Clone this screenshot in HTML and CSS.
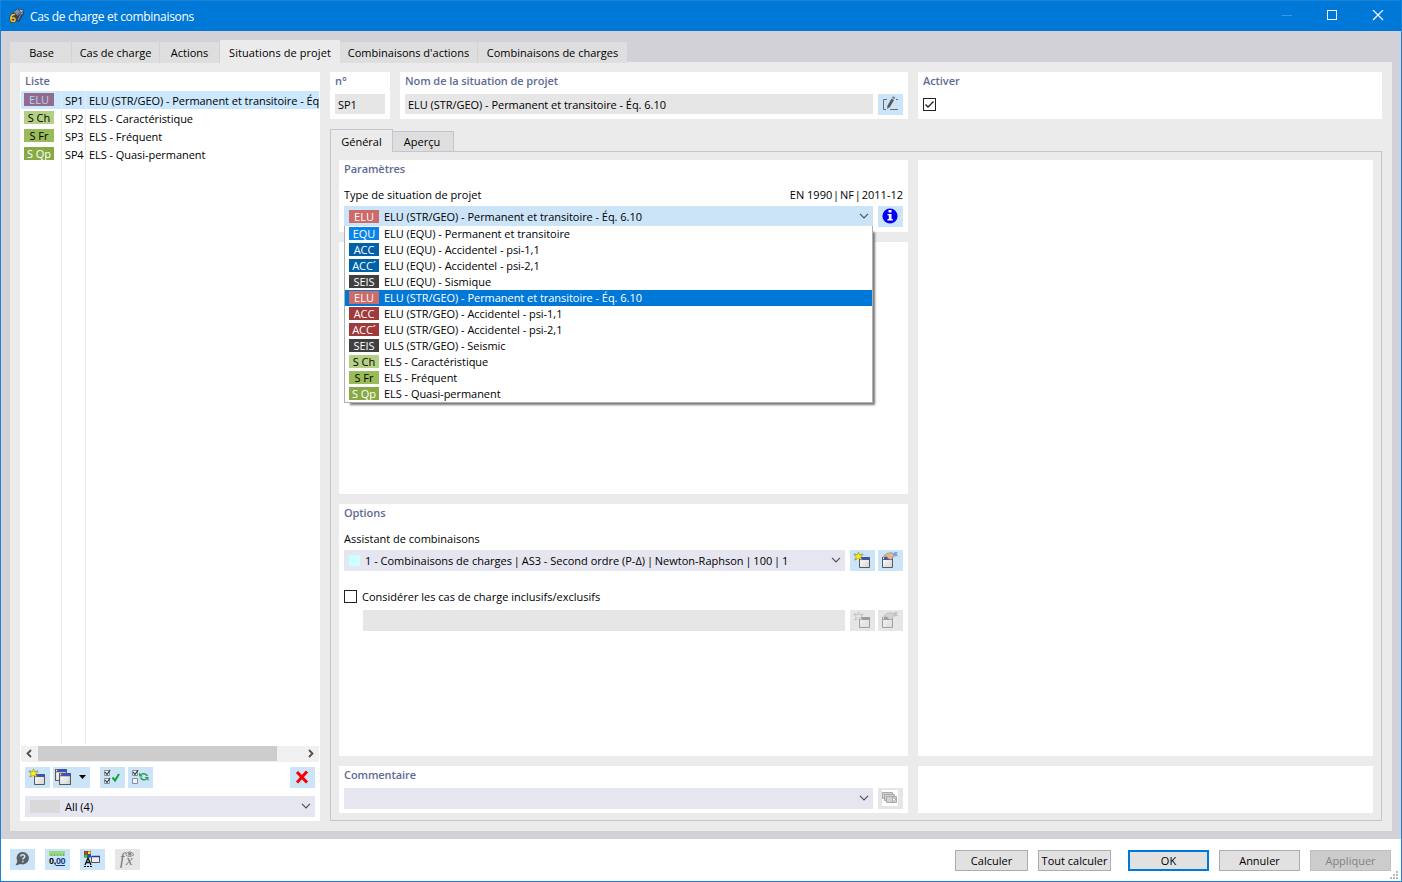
FILE: index.html
```html
<!DOCTYPE html>
<html lang="fr">
<head>
    <meta charset="UTF-8">
    <title>Cas de charge et combinaisons</title>
    <link rel="stylesheet" href="styles.css">
</head>
<body>

    <svg class="defs">
        <linearGradient id="face" x1="0" y1="0" x2="1" y2="1">
            <stop offset="0" stop-color="#ffffff"/>
            <stop offset="1" stop-color="#d4d4d4"/>
        </linearGradient>
        <symbol id="chevron" viewBox="0 0 10 6"><path d="M1 .8 L5 4.8 L9 .8" fill="none" stroke="#505058" stroke-width="1.2"/></symbol>
        <symbol id="win" viewBox="0 0 11 11">
            <path d="M.5 .5 H10.5 V10.5 H.5 Z" fill="url(#face)" stroke="#5a5a5a"/>
            <path d="M0 0 H11 V3 H0 Z" fill="#5a5a5a"/>
            <path d="M3 .6 H10 V2.2 H3 Z" fill="#2b4dff"/>
            <path d="M1 .6 H2 V2 H1 Z" fill="#fff"/>
        </symbol>
        <symbol id="new" viewBox="0 0 25 21">
            <use href="#win" x="9" y="7" width="11" height="11"/>
            <path d="M4.500 3.500 L12.500 9.500 M12.500 3.500 L4.500 9.500" stroke="#77773c" stroke-width=".8"/>
            <path d="M8.500 1.800 L9.700 5 L13.300 4.700 L10.600 7 L12 10.200 L8.500 8.300 L5.200 10.200 L6.300 7 L3.800 4.700 L7.300 5 Z" fill="#fff200" stroke="#8a8a5a" stroke-width=".6"/>
        </symbol>
        <symbol id="edit" viewBox="0 0 25 21">
            <use href="#win" x="4" y="7" width="11" height="11"/>
            <path d="M5.500 6 L9 3.400 L13 2.600 L16 4 L15 7 L14 9 L12.500 9.600 L10 8.500 L9 6.600 L6 6.800 Z" fill="#dcb896" stroke="#a57c5c" stroke-width=".6"/>
            <path d="M14.500 3.500 L17 2 L20 2 L18.500 3.500 L20 6 L16 6.500 Z" fill="#7ea4d8"/>
        </symbol>
    </svg>

    <div class="window">
        <div class="titlebar">
            <svg class="app-icon" width="16" height="16" viewBox="0 0 16 16">
                <path d="M4 4 L8 .5 L15 2 L15 6 L10 14 L6 13 Z" fill="#33425c"/>
                <path d="M5 4 L8.500 1 L11 4 L8 7 Z" fill="#8292b0"/>
                <path d="M10 1.500 L14.500 2.500 L12 4.500 Z" fill="#a9b6cc"/>
                <path d="M8 7.500 L11.500 5 L14 6 M9 12 L11 8 L14 3" fill="none" stroke="#93a2bd" stroke-width=".8"/>
                <path d="M6 6.500 C3 6 1.800 8 1.800 10.500 C1.800 12.800 2.500 13.600 4 13.600 C5.400 13.600 6.100 12.700 6.100 11.500 C6.100 9.800 4 9.300 2.600 10.500" fill="none" stroke="#3e3a20" stroke-width="2.600"/>
                <path d="M6 6.500 C3 6 1.800 8 1.800 10.500 C1.800 12.800 2.500 13.600 4 13.600 C5.400 13.600 6.100 12.700 6.100 11.500 C6.100 9.800 4 9.300 2.600 10.500" fill="none" stroke="#f5c22c" stroke-width="1.500"/>
            </svg>
            <span class="title">Cas de charge et combinaisons</span>
            <svg class="win-controls" width="110" height="12" viewBox="0 0 110 12" fill="none" stroke="#fff">
                <path d="M2 5.500 H12" stroke="#3d97e2"/>
                <rect x="47.500" y=".5" width="9" height="9"/>
                <path d="M93 0 L103 10 M103 0 L93 10" stroke-width="1.200"/>
            </svg>
        </div>

        <div class="workspace">
            <div class="tabs">
                <div class="tab base">Base</div>
                <div class="tab cas">Cas de charge</div>
                <div class="tab act">Actions</div>
                <div class="tab sit active">Situations de projet</div>
                <div class="tab comb-a">Combinaisons d'actions</div>
                <div class="tab comb-c">Combinaisons de charges</div>
            </div>

            <div class="page">
                <div class="panel list-panel">
                    <div class="heading">Liste</div>
                    <div class="list">
                        <div class="list-row selected"><span class="badge elu-sel">ELU</span><span class="no">SP1</span><span class="name">ELU (STR/GEO) - Permanent et transitoire - Éq. 6.10</span></div>
                        <div class="list-row"><span class="badge sch">S Ch</span><span class="no">SP2</span><span class="name">ELS - Caractéristique</span></div>
                        <div class="list-row"><span class="badge sfr">S Fr</span><span class="no">SP3</span><span class="name">ELS - Fréquent</span></div>
                        <div class="list-row"><span class="badge sqp">S Qp</span><span class="no">SP4</span><span class="name">ELS - Quasi-permanent</span></div>
                        <div class="list-row rest"><span class="badge"></span><span class="no"></span><span class="name"></span></div>
                    </div>
                    <div class="scrollbar">
                        <svg width="17" height="15" viewBox="0 0 17 15"><path d="M10 4 L6.500 7.500 L10 11" fill="none" stroke="#505050" stroke-width="1.800"/></svg>
                        <div class="thumb"></div>
                        <svg width="17" height="15" viewBox="0 0 17 15"><path d="M7 4 L10.500 7.500 L7 11" fill="none" stroke="#505050" stroke-width="1.800"/></svg>
                    </div>
                    <div class="toolbar">
                        <div class="btn"><svg class="shift" width="25" height="21"><use href="#new"/></svg></div>
                        <div class="btn wide">
                            <svg width="37" height="21" viewBox="0 0 37 21">
                                <use href="#win" x="2" y="2" width="12" height="12"/>
                                <use href="#win" x="6" y="6" width="12" height="12"/>
                                <path d="M26 8 H33 L29.500 12 Z" fill="#000"/>
                            </svg>
                        </div>
                        <div class="btn checks">
                            <svg width="25" height="21" viewBox="0 0 25 21" fill="none">
                                <path d="M4.500 3.500 H9.500 V8.500 H4.500 Z M4.500 11.500 H9.500 V16.500 H4.500 Z" stroke="#8a8f94" fill="#eef4fa"/>
                                <path d="M5 5 L7 7.500 L10 3 M5 13 L7 15.500 L10 11" stroke="#333" stroke-width="1.100"/>
                                <path d="M12.500 10.500 L15 13.500 L19 7" stroke="#14a03c" stroke-width="2"/>
                            </svg>
                        </div>
                        <div class="btn">
                            <svg width="25" height="21" viewBox="0 0 25 21" fill="none">
                                <path d="M4.500 3.500 H9.500 V8.500 H4.500 Z M4.500 11.500 H9.500 V16.500 H4.500 Z" stroke="#8a8f94" fill="#eef4fa"/>
                                <path d="M5 5 L7 7.500 L10 3" stroke="#333" stroke-width="1.100"/>
                                <path d="M13 7.500 C15 6 18 6.500 19.500 9 M18.500 12 C16.500 13.500 14 13 12.500 10.500" stroke="#2fa257" stroke-width="1.500"/>
                                <path d="M11 5.500 V9.500 H15 Z M20.500 14 V10 H16.500 Z" fill="#2fa257"/>
                            </svg>
                        </div>
                        <div class="btn delete">
                            <svg width="25" height="21" viewBox="0 0 25 21"><path d="M7 5 L17 15.500 M17 4.500 L7 15.500" stroke="#f80000" stroke-width="3"/></svg>
                        </div>
                    </div>
                    <div class="combo filter">
                        <span class="swatch grey"></span><span>All (4)</span>
                        <svg class="chev" width="10" height="6"><use href="#chevron"/></svg>
                    </div>
                </div>

                <div class="detail">
                    <div class="header-row">
                        <div class="panel number">
                            <div class="heading">n°</div>
                            <div class="field">SP1</div>
                        </div>
                        <div class="panel designation">
                            <div class="heading">Nom de la situation de projet</div>
                            <div class="line">
                                <div class="field">ELU (STR/GEO) - Permanent et transitoire - Éq. 6.10</div>
                                <div class="btn">
                                    <svg width="25" height="21" viewBox="0 0 25 21">
                                        <path d="M9 5.500 H5.500 V15.500 H8 M12 15.500 H20 M18 5.500 H20" fill="none" stroke="#6a6a6a"/>
                                        <path d="M9 15 L9.600 11.500 L13.500 4.500 L16 6 L12 13 Z" fill="#5a5a5a"/>
                                        <path d="M14 3.800 L15 2.300 L17.200 3.500 L16.400 5.200 Z" fill="#777"/>
                                    </svg>
                                </div>
                            </div>
                        </div>
                        <div class="panel enable">
                            <div class="heading">Activer</div>
                            <svg class="checkbox" width="13" height="13" viewBox="0 0 13 13" fill="none" stroke="#222">
                                <rect x=".5" y=".5" width="12" height="12"/>
                                <path d="M2.500 6.500 L5 9 L10.500 3.500" stroke-width="1.300"/>
                            </svg>
                        </div>
                    </div>

                    <div class="subtabs">
                        <div class="subtab active">Général</div>
                        <div class="subtab">Aperçu</div>
                    </div>

                    <div class="sheet">
                        <div class="panel params">
                            <div class="heading">Paramètres</div>
                            <div class="label-row"><span>Type de situation de projet</span><span class="norm">EN 1990 <span class="bar">|</span> NF <span class="bar">|</span> 2011-12</span></div>
                            <div class="line type-line">
                                <div class="combo open">
                                    <span class="badge elu">ELU</span><span>ELU (STR/GEO) - Permanent et transitoire - Éq. 6.10</span>
                                    <svg class="chev" width="10" height="6"><use href="#chevron"/></svg>
                                    <div class="dropdown">
                                        <div class="option"><span class="badge equ">EQU</span>ELU (EQU) - Permanent et transitoire</div>
                                        <div class="option"><span class="badge acc-b">ACC</span>ELU (EQU) - Accidentel - psi-1,1</div>
                                        <div class="option"><span class="badge acc-b">ACC´</span>ELU (EQU) - Accidentel - psi-2,1</div>
                                        <div class="option"><span class="badge seis">SEIS</span>ELU (EQU) - Sismique</div>
                                        <div class="option current"><span class="badge elu">ELU</span>ELU (STR/GEO) - Permanent et transitoire - Éq. 6.10</div>
                                        <div class="option"><span class="badge acc-r">ACC</span>ELU (STR/GEO) - Accidentel - psi-1,1</div>
                                        <div class="option"><span class="badge acc-r">ACC´</span>ELU (STR/GEO) - Accidentel - psi-2,1</div>
                                        <div class="option"><span class="badge seis">SEIS</span>ULS (STR/GEO) - Seismic</div>
                                        <div class="option"><span class="badge sch">S Ch</span>ELS - Caractéristique</div>
                                        <div class="option"><span class="badge sfr">S Fr</span>ELS - Fréquent</div>
                                        <div class="option"><span class="badge sqp">S Qp</span>ELS - Quasi-permanent</div>
                                    </div>
                                </div>
                                <div class="btn">
                                    <svg width="25" height="21" viewBox="0 0 25 21">
                                        <circle cx="12" cy="10" r="7.600" fill="#0000f5"/>
                                        <path d="M10.500 4 H13.500 V6.500 H10.500 Z M9.500 8 H13.500 V13 H14.800 V14.500 H9.500 V13 H10.800 V9.300 H9.500 Z" fill="#fff"/>
                                    </svg>
                                </div>
                            </div>
                        </div>
                        <div class="panel preview"></div>
                        <div class="panel"></div>
                        <div class="panel options">
                            <div class="heading">Options</div>
                            <div class="label-row"><span>Assistant de combinaisons</span></div>
                            <div class="line">
                                <div class="combo">
                                    <span class="swatch cyan"></span><span class="wizard">1 - Combinaisons de charges <span class="bar">|</span> AS3 - Second ordre (P-Δ) <span class="bar">|</span> Newton-Raphson <span class="bar">|</span> 100 <span class="bar">|</span> 1</span>
                                    <svg class="chev" width="10" height="6"><use href="#chevron"/></svg>
                                </div>
                                <div class="btn"><svg width="25" height="21"><use href="#new"/></svg></div>
                                <div class="btn"><svg width="25" height="21"><use href="#edit"/></svg></div>
                            </div>
                            <div class="check-row">
                                <svg class="checkbox" width="13" height="13" viewBox="0 0 13 13" fill="none" stroke="#222"><rect x=".5" y=".5" width="12" height="12"/></svg>
                                <span>Considérer les cas de charge inclusifs/exclusifs</span>
                            </div>
                            <div class="line indent">
                                <div class="field off"></div>
                                <div class="btn off"><svg width="25" height="21"><use href="#new"/></svg></div>
                                <div class="btn off"><svg width="25" height="21"><use href="#edit"/></svg></div>
                            </div>
                        </div>
                        <div class="panel comment">
                            <div class="heading">Commentaire</div>
                            <div class="line">
                                <div class="combo"><svg class="chev" width="10" height="6"><use href="#chevron"/></svg></div>
                                <div class="btn plain">
                                    <svg width="25" height="21" viewBox="0 0 25 21">
                                        <path d="M4 2 H20 V18 H4 Z" fill="#fff"/>
                                        <g fill="#d2d2d2" stroke="#aaa">
                                            <path d="M4.500 4.500 H14.500 V10.500 H4.500 Z"/>
                                            <path d="M6.500 6.500 H16.500 V12.500 H6.500 Z"/>
                                            <path d="M8.500 8.500 H18.500 V14.500 H8.500 Z"/>
                                        </g>
                                        <path d="M14.500 9.500 V14 L18 11 Z" fill="#fff" stroke="#888" stroke-width=".6"/>
                                    </svg>
                                </div>
                            </div>
                        </div>
                        <div class="panel"></div>
                    </div>
                </div>
            </div>
        </div>

        <div class="footer">
            <div class="btn">
                <svg width="25" height="21" viewBox="0 0 25 21">
                    <path d="M12.700 3 A6.200 6.200 0 1 1 10.500 15 L5.500 16.500 L7.300 12.500 A6.300 6.300 0 0 1 12.700 3 Z" fill="#5c6064"/>
                    <path d="M10.600 7.500 C10.800 5 15 5.200 14.800 7.600 C14.600 9 12.800 9 12.800 10.500 M12.800 11.700 V13.200" fill="none" stroke="#cce4f7" stroke-width="1.500"/>
                </svg>
            </div>
            <div class="btn">
                <svg width="25" height="21" viewBox="0 0 25 21">
                    <path d="M4 2 H20 V7 H4 Z" fill="#97d884"/>
                    <path d="M6.500 5 V7 M9.500 5 V7 M12.500 5 V7 M15.500 5 V7 M18.500 5 V7" stroke="#5fa05a" stroke-width=".7"/>
                    <text class="decimals" x="4" y="15">0,<tspan fill="#173a80">00</tspan></text>
                    <path d="M11 16.500 H20" stroke="#173a80"/>
                </svg>
            </div>
            <div class="btn">
                <svg width="25" height="21" viewBox="0 0 25 21">
                    <path d="M4 2 H11 V8.500 H4 Z" fill="#555"/>
                    <path d="M4.500 2.500 H7 V5 H4.500 Z" fill="#f22"/><path d="M8 2.500 H10.500 V5 H8 Z" fill="#fe0"/>
                    <path d="M4.500 5.800 H7 V8.200 H4.500 Z" fill="#0e3"/><path d="M8 5.800 H10.500 V8.200 H8 Z" fill="#24f"/>
                    <path d="M5 16 L8 9 L11 16 M6.200 13.500 H10" fill="none" stroke="#111" stroke-width="1.300"/>
                    <path d="M4 17.500 H12" stroke="#111" stroke-dasharray="2 1"/>
                    <path d="M11.500 7.500 H19.500 V13.500 H11.500 Z" fill="#eee" stroke="#555"/>
                    <path d="M12 7.500 H20" stroke="#2438b8" stroke-width="1.500"/>
                </svg>
            </div>
            <div class="btn plain">
                <svg width="25" height="21" viewBox="0 0 25 21">
                    <text class="formula" x="5" y="15">f</text>
                    <text class="formula x" x="11" y="16">x</text>
                    <path d="M10.500 5.500 Q14.500 .5 19 5.500 Q14.500 9.500 10.500 5.500 Z" fill="none" stroke="#888"/>
                    <circle cx="14.800" cy="5" r="1.800" fill="#888"/>
                </svg>
            </div>
            <div class="actions">
                <div class="push">Calculer</div>
                <div class="push">Tout calculer</div>
                <div class="push large ok">OK</div>
                <div class="push large">Annuler</div>
                <div class="push large disabled">Appliquer</div>
            </div>
            <svg class="grip" width="8" height="8" viewBox="0 0 8 8" fill="#b9b9b9">
                <path d="M6 0h2v2h-2z M3 3h2v2h-2z M6 3h2v2h-2z M0 6h2v2h-2z M3 6h2v2h-2z M6 6h2v2h-2z"/>
            </svg>
        </div>
    </div>

</body>
</html>
```

FILE: styles.css
```css
* {
    box-sizing: border-box;
}
body {
    margin: 0;
    font-family: "Open Sans", "Noto Sans", sans-serif;
    font-size: 11px;
    color: #000;
    white-space: nowrap;
    overflow: hidden;
}
svg {
    display: block;
    flex: none;
}
.defs {
    position: absolute;
    width: 0;
    height: 0;
}
.window {
    width: 1402px;
    height: 882px;
    display: flex;
    flex-direction: column;
    border: 1px solid #1883d7;
    border-top: none;
}

/* title bar */
.titlebar {
    height: 31px;
    display: flex;
    align-items: center;
    padding: 0 11px 0 8px;
    background: #0078d7;
    border-top: 1px solid #1883d7;
    color: #fff;
    font-size: 12px;
}
.title {
    margin-left: 5px;
    letter-spacing: -0.31px;
}
.win-controls {
    margin-left: auto;
}

/* main tabs */
.workspace {
    height: 808px;
    padding: 9px 9px 0;
    background: #d2d1d7;
}
.tabs {
    position: relative;
    display: flex;
    align-items: flex-end;
    height: 23px;
    margin-bottom: -1px;
}
.tab {
    height: 21px;
    line-height: 22px;
    text-align: center;
    background: #dedede;
    border-right: 1px solid #d2d1d7;
}
.tab.active {
    height: 23px;
    line-height: 26px;
    background: #ebebeb;
    border: none;
    letter-spacing: 0.08px;
}
.tab.base { width: 62px; padding-left: 2px; }
.tab.cas { width: 88px; }
.tab.act { width: 60px; }
.tab.sit { width: 120px; }
.tab.comb-a { width: 138px; }
.tab.comb-c { width: 149px; border: none; }

.page {
    height: 769px;
    display: flex;
    gap: 10px;
    padding: 10px;
    background: #ebebeb;
}
.panel {
    background: #fff;
}
.heading {
    height: 19px;
    padding-left: 5px;
    line-height: 18px;
    font-weight: 600;
    letter-spacing: -0.08px;
    color: #5e6c94;
}

/* list */
.list-panel {
    width: 300px;
    height: 749px;
    display: flex;
    flex-direction: column;
}
.list {
    height: 653px;
    margin: 0 1px;
    display: flex;
    flex-direction: column;
}
.list-row {
    height: 18px;
    display: flex;
    line-height: 19px;
}
.list-row.selected {
    background: #cce8ff;
}
.list-row.rest {
    flex: 1;
}
.list-row .badge {
    margin: 2px 7px 0 3px;
}
.list-row .no {
    width: 25px;
    padding-left: 3px;
    letter-spacing: -0.15px;
    border-left: 1px solid #ebebeb;
    border-right: 1px solid #ebebeb;
}
.list-row .name {
    flex: 1;
    padding-left: 3px;
    letter-spacing: -0.05px;
    overflow: hidden;
}
.badge {
    flex: none;
    width: 30px;
    height: 13px;
    line-height: 14px;
    text-align: center;
}
.elu-sel { background: #936c8d; color: #b4d2f5; }
.elu { background: #cd6b6b; color: #fff; }
.equ { background: #0a84e8; color: #fff; }
.acc-b { background: #0060a8; color: #fff; }
.acc-r { background: #a03a3a; color: #fff; }
.seis { background: #404040; color: #fff; }
.sch { background: #b4d084; }
.sfr { background: #9abb59; }
.sqp { background: #88aa44; color: #fff; }

.scrollbar {
    height: 16px;
    margin: 2px 1px 0;
    display: flex;
    justify-content: space-between;
    background: #f0f0f0;
}
.thumb {
    width: 239px;
    height: 15px;
    margin-right: 25px;
    background: #cdcdcd;
}
.toolbar {
    display: flex;
    gap: 3px;
    margin: 5px 5px 8px;
}
.btn {
    flex: none;
    width: 25px;
    height: 21px;
    background: #cce4f7;
}
.btn.wide {
    width: 37px;
}
.btn.delete {
    margin-left: auto;
}
.btn.off, .btn.plain {
    background: #e6e6e6;
}
.btn.off svg {
    filter: grayscale(1);
    opacity: 0.5;
}
.combo {
    position: relative;
    flex: 1;
    height: 21px;
    display: flex;
    align-items: center;
    gap: 5px;
    padding: 0 4px 0 5px;
    background: #e6e6f1;
}
.combo .chev {
    margin: 0 0 1px auto;
}
.combo.filter {
    flex: none;
    margin: 0 5px;
}
.swatch.grey {
    width: 30px;
    height: 13px;
    background: #d9d9d9;
}
.swatch.cyan {
    width: 11px;
    height: 11px;
    background: #ccffff;
}

/* detail side */
.detail {
    width: 1052px;
}
.header-row {
    display: flex;
    gap: 10px;
    height: 47px;
}
.number { width: 60px; }
.designation { width: 508px; }
.enable { flex: 1; }
.number .field {
    margin: 3px 5px;
}
.field {
    flex: 1;
    height: 20px;
    padding-left: 3px;
    line-height: 22px;
    letter-spacing: -0.04px;
    background: #e6e6e6;
}
.line {
    display: flex;
    gap: 5px;
    padding: 0 5px;
}
.line .btn + .btn {
    margin-left: -2px;
}
.toolbar .checks {
    margin-left: 7px;
}
.header-row .line {
    padding-top: 3px;
}
.enable .checkbox {
    margin: 7px 5px;
}

.subtabs {
    display: flex;
    align-items: flex-end;
    height: 23px;
    margin-top: 10px;
    position: relative;
}
.subtab {
    width: 61px;
    height: 21px;
    line-height: 19px;
    padding-right: 2px;
    text-align: center;
    background: #dedede;
    border: 1px solid #c5c4d1;
    border-left: none;
}
.subtab.active {
    width: 63px;
    height: 23px;
    line-height: 24px;
    padding-right: 0;
    background: #ebebeb;
    border-left: 1px solid #c5c4d1;
    border-bottom: none;
}
.sheet {
    height: 670px;
    margin-top: -1px;
    padding: 8px;
    display: grid;
    grid-template-columns: 569px 455px;
    grid-template-rows: 72px 252px 252px 47px;
    gap: 10px;
    border: 1px solid #c5c4d1;
}
.preview {
    grid-row: 1 / 4;
    grid-column: 2;
}
.label-row {
    display: flex;
    justify-content: space-between;
    height: 27px;
    padding: 0 5px;
    line-height: 32px;
}
.norm .bar {
    margin: 0 -2px;
}
.wizard .bar {
    margin: 0 -1px;
}
.combo.open {
    height: 20px;
    letter-spacing: -0.04px;
    background: #cce4f7;
}
.dropdown {
    position: absolute;
    left: 0;
    top: 20px;
    width: 529px;
    z-index: 2;
    background: #fff;
    border: 1px solid #b0b0b0;
    border-top: none;
    box-shadow: 4px 4px 2px -2px #777;
}
.option {
    height: 16px;
    display: flex;
    align-items: flex-start;
    gap: 5px;
    padding: 1px 0 0 4px;
    line-height: 14px;
}
.option.current {
    background: #0078d7;
    color: #fff;
}
.options .line {
    height: 21px;
}
.check-row {
    display: flex;
    align-items: center;
    gap: 5px;
    height: 13px;
    margin: 19px 5px 7px;
}
.options .indent {
    padding-left: 24px;
}
.field.off {
    height: 21px;
}
.comment .line {
    padding-top: 3px;
}

/* footer */
.footer {
    height: 42px;
    display: flex;
    gap: 10px;
    padding: 10px 10px 0 9px;
    background: #fff;
    position: relative;
}
.decimals {
    font-family: "Liberation Sans", Arial, sans-serif;
    font-size: 9px;
    font-weight: bold;
    letter-spacing: -0.3px;
}
.formula {
    font-family: "Liberation Serif", serif;
    font-style: italic;
    font-size: 16px;
    fill: #777;
}
.formula.x {
    font-size: 15px;
}
.actions {
    display: flex;
    gap: 10px;
    margin: 1px 0 0 auto;
}
.push {
    width: 73px;
    height: 21px;
    line-height: 20px;
    text-align: center;
    background: #e1e1e1;
    border: 1px solid #adadad;
}
.push.large {
    width: 81px;
}
.push.ok {
    margin-left: 7px;
    line-height: 18px;
    border: 2px solid #0078d7;
}
.push.disabled {
    background: #cccccc;
    border-color: #bfbfbf;
    color: #838383;
}
.grip {
    position: absolute;
    right: 3px;
    bottom: 2px;
}
```
